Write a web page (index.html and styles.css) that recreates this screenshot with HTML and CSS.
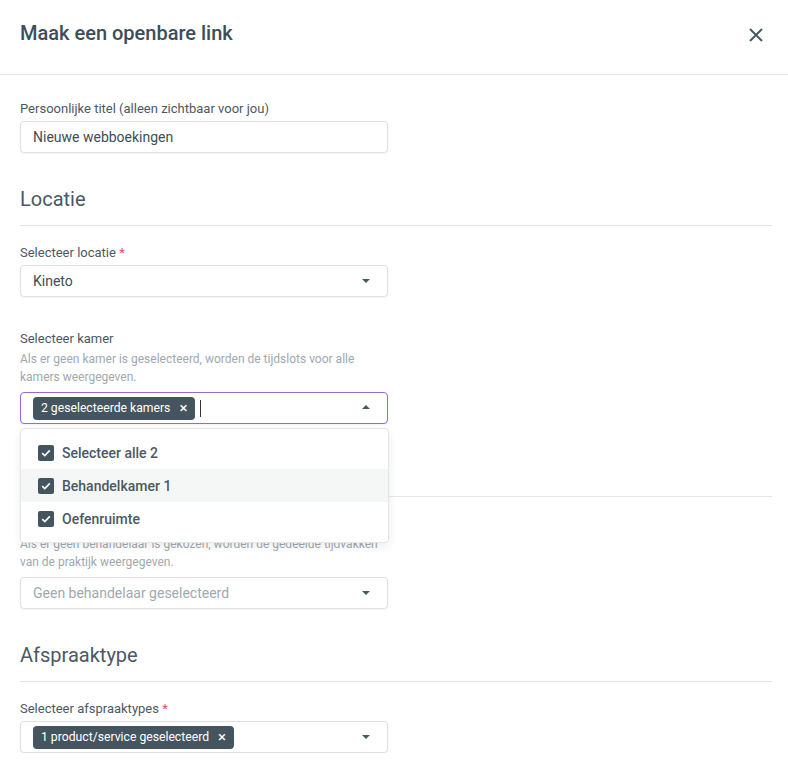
FILE: index.html
```html
<!DOCTYPE html>
<html lang="nl">
<head>
<meta charset="utf-8">
<title>Maak een openbare link</title>
<link rel="stylesheet" href="styles.css">
</head>
<body>
<div class="modal">
  <header class="modal-header">
    <h1 class="modal-title">Maak een openbare link</h1>
    <button class="close-btn" aria-label="Sluiten">
      <svg width="16" height="16" viewBox="0 0 16 16"><path d="M2 2L14 14M14 2L2 14" stroke="#455a64" stroke-width="2" fill="none"/></svg>
    </button>
  </header>
  <div class="modal-body">
    <div class="field">
      <label class="label">Persoonlijke titel (alleen zichtbaar voor jou)</label>
      <div class="input">Nieuwe webboekingen</div>
    </div>

    <h2 class="section-title">Locatie</h2>
    <div class="field first">
      <label class="label">Selecteer locatie <span class="req">*</span></label>
      <div class="input select">
        <span class="value">Kineto</span>
        <span class="caret down"></span>
      </div>
    </div>
    <div class="field">
      <label class="label">Selecteer kamer</label>
      <p class="help">Als er geen kamer is geselecteerd, worden de tijdslots voor alle kamers weergegeven.</p>
      <div class="select-wrap">
        <div class="input select focused">
          <span class="chip">2 geselecteerde kamers <span class="chip-x">×</span></span>
          <span class="cursor"></span>
          <span class="caret up"></span>
        </div>
        <ul class="dropdown">
          <li class="option"><span class="check"><svg width="10" height="8" viewBox="0 0 10 8"><path d="M1.2 4.2L3.8 6.6L8.8 1.4" stroke="#fff" stroke-width="1.6" fill="none"/></svg></span>Selecteer alle 2</li>
          <li class="option hover"><span class="check"><svg width="10" height="8" viewBox="0 0 10 8"><path d="M1.2 4.2L3.8 6.6L8.8 1.4" stroke="#fff" stroke-width="1.6" fill="none"/></svg></span>Behandelkamer 1</li>
          <li class="option"><span class="check"><svg width="10" height="8" viewBox="0 0 10 8"><path d="M1.2 4.2L3.8 6.6L8.8 1.4" stroke="#fff" stroke-width="1.6" fill="none"/></svg></span>Oefenruimte</li>
        </ul>
      </div>
    </div>

    <h2 class="section-title">Behandelaar</h2>
    <div class="field first">
      <label class="label">Selecteer behandelaar</label>
      <p class="help">Als er geen behandelaar is gekozen, worden de gedeelde tijdvakken van de praktijk weergegeven.</p>
      <div class="input select">
        <span class="placeholder">Geen behandelaar geselecteerd</span>
        <span class="caret down"></span>
      </div>
    </div>

    <h2 class="section-title">Afspraaktype</h2>
    <div class="field first">
      <label class="label">Selecteer afspraaktypes <span class="req">*</span></label>
      <div class="input select">
        <span class="chip">1 product/service geselecteerd <span class="chip-x">×</span></span>
        <span class="caret down"></span>
      </div>
    </div>
  </div>
</div>
</body>
</html>
```

FILE: styles.css
```css
* { box-sizing: border-box; }
html, body { margin: 0; padding: 0; background: #fff; }
body {
  font-family: Roboto, "Liberation Sans", sans-serif;
  color: #3d4d58;
  -webkit-font-smoothing: antialiased;
}
.modal { width: 788px; }
.modal-header {
  height: 75px;
  border-bottom: 1px solid #e4e6e8;
  display: flex;
  align-items: center;
  justify-content: space-between;
  padding: 0 24px 8px 20px;
}
.modal-title {
  margin: 0;
  font-size: 20px;
  font-weight: 500;
  color: #3d4e5a;
  line-height: 28px;
}
.close-btn {
  border: 0;
  background: none;
  padding: 0;
  width: 16px;
  height: 16px;
  display: flex;
  margin-top: 4px;
}
.modal-body { padding: 23px 16px 0 20px; }
.field { margin-top: 31px; }
.field:first-child { margin-top: 0; }
.field.first { margin-top: 16px; }
.label {
  display: block;
  font-size: 13px;
  line-height: 18px;
  color: #4b5964;
  padding-top: 2px;
  margin-bottom: 3px;
}
.req { color: #e8457a; }
.help {
  margin: -1px 0 6px;
  font-size: 12px;
  line-height: 18px;
  color: #a0a9b0;
  width: 368px;
}
.input {
  width: 368px;
  height: 32px;
  border: 1px solid #dde1e4;
  border-radius: 4px;
  box-shadow: 0 1px 2px rgba(0,0,0,0.05);
  display: flex;
  align-items: center;
  padding: 0 12px;
  font-size: 14px;
  color: #3d4d58;
  background: #fff;
}
.select { position: relative; padding-right: 32px; }
.select.focused { border-color: #9a66dc; }
.placeholder { color: #a0a9b0; }
.caret {
  position: absolute;
  right: 17px;
  top: 50%;
  width: 0;
  height: 0;
  border-left: 4.5px solid transparent;
  border-right: 4.5px solid transparent;
}
.caret.down { border-top: 4.5px solid #455a64; margin-top: -2px; }
.caret.up { border-bottom: 4.5px solid #455a64; margin-top: -3px; }
.chip {
  display: inline-flex;
  align-items: center;
  height: 23px;
  background: #45555f;
  color: #fff;
  border-radius: 4px;
  font-size: 12.2px;
  padding: 0 8px;
  white-space: nowrap;
}
.chip-x { margin-left: 9px; font-size: 15px; line-height: 1; }
.cursor {
  width: 1px;
  height: 17px;
  background: #333;
  margin-left: 5px;
}
.select-wrap { position: relative; }
.dropdown {
  position: absolute;
  top: 36px;
  left: 0;
  width: 369px;
  margin: 0;
  padding: 7px 0;
  list-style: none;
  background: #fff;
  border: 1px solid #e3e6e8;
  border-radius: 4px;
  box-shadow: 0 3px 8px rgba(0,0,0,0.08);
  z-index: 10;
}
.option {
  height: 33px;
  display: flex;
  align-items: center;
  padding-left: 17px;
  font-size: 14px;
  font-weight: 500;
  color: #4a5964;
}
.option.hover { background: #f5f7f7; }
.check {
  width: 16px;
  height: 16px;
  border-radius: 2px;
  background: #45555f;
  display: flex;
  align-items: center;
  justify-content: center;
  margin-right: 8px;
}
.section-title {
  margin: 32px 0 0;
  font-size: 20px;
  font-weight: 400;
  line-height: 28px;
  color: #4a5964;
  padding-bottom: 12px;
  border-bottom: 1px solid #e4e6e8;
}
```
